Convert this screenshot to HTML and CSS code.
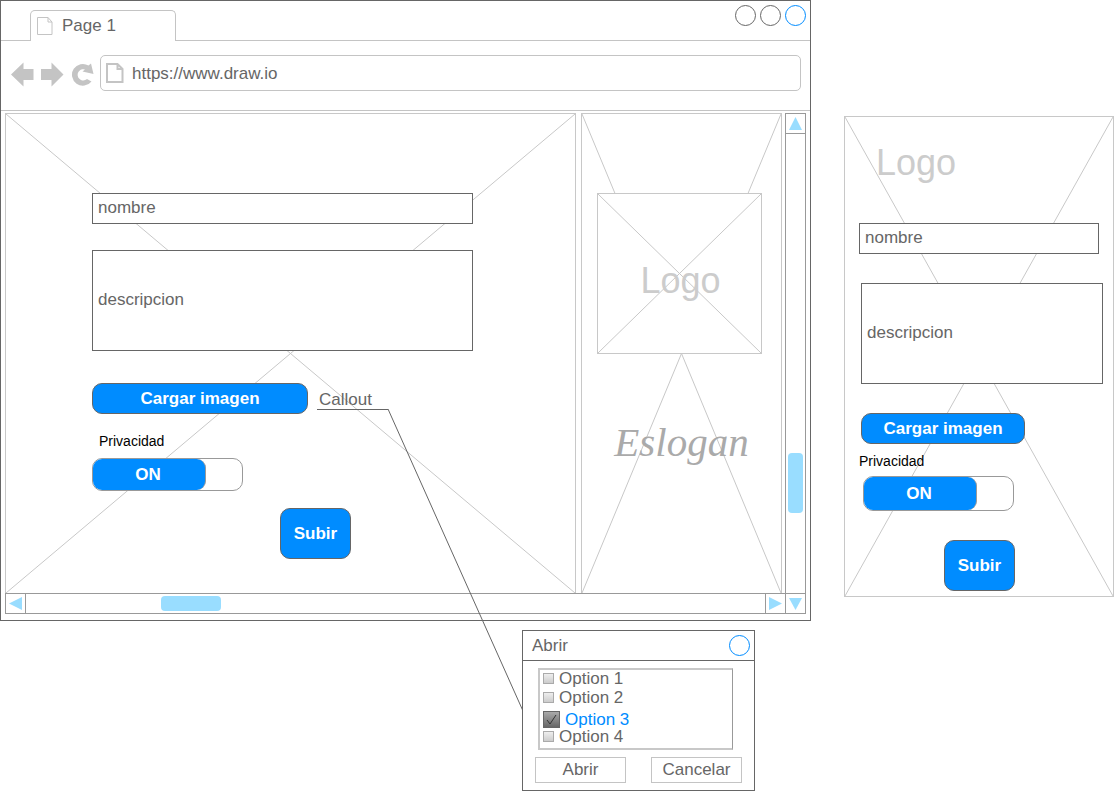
FILE: index.html
```html
<!DOCTYPE html>
<html lang="es">
<head>
<meta charset="utf-8">
<title>Page 1</title>
<link rel="stylesheet" href="styles.css">
</head>
<body>
<div class="board">
  <section class="browser">
    <header class="tabbar">
      <div class="tab">
        <svg class="tab-icon" viewBox="0 0 18 20"><path d="M1.500 1.500h10.500l4 4.500v12.500h-14.500zM12 1.500v4.500h4"/></svg>
        <span>Page 1</span>
      </div>
      <div class="window-buttons">
        <button class="circle" aria-label="Minimizar"></button>
        <button class="circle" aria-label="Maximizar"></button>
        <button class="circle circle-blue" aria-label="Cerrar"></button>
      </div>
    </header>
    <div class="toolbar">
      <button class="nav" aria-label="Atrás"><svg viewBox="0 0 24 26"><path d="M0 12.500L12.500 0.500v6.500H22.500v11H12.500V24.500z"/></svg></button>
      <button class="nav" aria-label="Adelante"><svg viewBox="0 0 24 26"><path d="M22.500 12.500L10.500 0.500v6.500H0v11h10.500V24.500z"/></svg></button>
      <button class="nav" aria-label="Recargar"><svg viewBox="0 0 24 26"><path d="M17.500 3.500L20 1.500L22.500 12L11.500 9.500L14 7.500A5.600 5.600 0 1 0 16 17L20.500 19.500A10.900 10.900 0 1 1 17.500 3.500z"/></svg></button>
      <div class="address">
        <svg class="address-icon" viewBox="0 0 20 22"><path d="M2 2h10.500l5 5v13h-15.500zM12.500 2v5h5"/></svg>
        <input class="url" type="text" aria-label="Dirección" value="https://www.draw.io">
      </div>
    </div>
    <div class="viewport">
      <div class="panes">
        <main class="wire pane-main">
          <svg class="cross" viewBox="0 0 100 100" preserveAspectRatio="none"><path d="M0 0L100 100M100 0L0 100"/></svg>
          <form class="form">
            <input class="field" type="text" aria-label="nombre" value="nombre">
            <textarea class="field area" aria-label="descripcion">descripcion</textarea>
            <div class="upload-row">
              <button type="button" class="primary upload">Cargar imagen</button>
              <div class="callout">Callout
                <svg class="leader" viewBox="0 0 135 302"><path d="M0 0L135 302"/></svg>
              </div>
            </div>
            <span class="caption" id="privacy-main">Privacidad</span>
            <button type="button" class="switch" role="switch" aria-checked="true" aria-labelledby="privacy-main"><span class="knob">ON</span></button>
            <button type="button" class="primary submit">Subir</button>
          </form>
        </main>
        <aside class="wire pane-side">
          <svg class="cross" viewBox="0 0 100 100" preserveAspectRatio="none"><path d="M0 0L100 100M100 0L0 100"/></svg>
          <div class="wire logo-box">
            <svg class="cross" viewBox="0 0 100 100" preserveAspectRatio="none"><path d="M0 0L100 100M100 0L0 100"/></svg>
            <span class="logo">Logo</span>
          </div>
          <p class="slogan">Eslogan</p>
        </aside>
      </div>
      <div class="vscroll">
        <svg class="arrow" viewBox="0 0 19 19"><path d="M9.500 3L16 16H3z"/></svg>
        <div class="vtrack"><div class="vthumb"></div></div>
        <svg class="arrow" viewBox="0 0 19 19"><path d="M9.500 16L16 4H3z"/></svg>
      </div>
      <div class="hscroll">
        <svg class="arrow" viewBox="0 0 19 19"><path d="M3 9.500L16 3v13z"/></svg>
        <div class="htrack"><div class="hthumb"></div></div>
        <svg class="arrow" viewBox="0 0 19 19"><path d="M16 9.500L3 3v13z"/></svg>
      </div>
    </div>
  </section>

  <section class="wire phone">
    <svg class="cross" viewBox="0 0 100 100" preserveAspectRatio="none"><path d="M0 0L100 100M100 0L0 100"/></svg>
    <form class="phone-form">
      <span class="logo phone-logo">Logo</span>
      <input class="field phone-name" type="text" aria-label="nombre" value="nombre">
      <textarea class="field area phone-area" aria-label="descripcion">descripcion</textarea>
      <button type="button" class="primary phone-upload">Cargar imagen</button>
      <span class="caption phone-caption" id="privacy-phone">Privacidad</span>
      <button type="button" class="switch phone-switch" role="switch" aria-checked="true" aria-labelledby="privacy-phone"><span class="knob">ON</span></button>
      <button type="button" class="primary submit phone-submit">Subir</button>
    </form>
  </section>

  <section class="dialog" role="dialog" aria-labelledby="dialog-title">
    <header class="dialog-head">
      <span id="dialog-title">Abrir</span>
      <button class="circle circle-blue" aria-label="Cerrar"></button>
    </header>
    <div class="options">
      <label class="option"><input type="checkbox">Option 1</label>
      <label class="option option-second"><input type="checkbox">Option 2</label>
      <label class="option option-on"><span class="tick"><input type="checkbox" checked><svg viewBox="0 0 17 17"><path d="M4 9l3 4L13 4"/></svg></span>Option 3</label>
      <label class="option"><input type="checkbox">Option 4</label>
    </div>
    <div class="actions">
      <button class="plain">Abrir</button>
      <button class="plain">Cancelar</button>
    </div>
  </section>
</div>
</body>
</html>
```

FILE: styles.css
```css
* { box-sizing: border-box; }

body {
  margin: 0;
  background: #fff;
  color: #666;
  font: 17px/20px "Liberation Sans", Arial, sans-serif;
}

button, input, textarea {
  margin: 0;
  padding: 0;
  border: 0;
  background: none;
  color: inherit;
  font: inherit;
}

svg { display: block; fill: none; }

.board {
  display: grid;
  grid-template-columns: minmax(0, 811fr) minmax(0, 270fr);
  column-gap: 33px;
  row-gap: 9px;
  align-items: start;
}

/* Placeholder boxes with crossed diagonals */
.wire { position: relative; border: 1px solid #c8c8c8; background: #fff; }
.cross { position: absolute; inset: 0; width: 100%; height: 100%; }
.cross path { stroke: #c8c8c8; stroke-width: 1; vector-effect: non-scaling-stroke; }

/* Browser window */
.browser { border: 1px solid #666; }

.tabbar {
  display: flex;
  justify-content: space-between;
  height: 40px;
  padding-left: 29px;
  border-bottom: 1px solid #c4c4c4;
}

.tab {
  display: flex;
  align-items: center;
  gap: 8px;
  width: 146px;
  height: 31px;
  margin-top: 9px;
  padding-left: 5px;
  border: 1px solid #c4c4c4;
  border-bottom: 0;
  border-radius: 5px 5px 0 0;
  background: #fff;
}

.tab-icon { width: 18px; height: 20px; stroke: #c4c4c4; }

.window-buttons { display: flex; gap: 4px; padding: 4px 4px 0 0; }
.circle { width: 21px; height: 21px; border: 1px solid #666; border-radius: 50%; }
.circle-blue { border-color: #008cff; }

.toolbar {
  display: flex;
  align-items: center;
  gap: 6px;
  padding: 14px 9px 19px 10px;
  border-bottom: 1px solid #c4c4c4;
}

.nav { width: 24px; height: 26px; margin-top: 4px; }
.nav svg { width: 24px; height: 26px; fill: #c4c4c4; }

.address {
  display: flex;
  flex: 1;
  align-items: center;
  gap: 7px;
  height: 36px;
  margin-left: -1px;
  padding-left: 4px;
  border: 1px solid #c4c4c4;
  border-radius: 5px;
}

.address-icon { width: 20px; height: 22px; stroke: #c4c4c4; stroke-width: 2; }
.url { flex: 1; min-width: 0; height: 22px; padding-top: 2px; }

.viewport {
  display: grid;
  grid-template-columns: minmax(0, 1fr) 21px;
  grid-template-rows: auto 21px;
  padding: 2px 4px 6px;
}

.panes {
  display: grid;
  grid-template-columns: minmax(0, 571fr) minmax(0, 201fr);
  gap: 5px;
  min-height: 480px;
  padding-right: 3px;
}

.pane-main, .pane-side { border-bottom: 0; }
.pane-main { padding: 79px 102px 34px 86px; z-index: 1; }
.pane-side { padding: 79px 19px 0 15px; }

/* Form controls */
.form, .phone-form { position: relative; display: flex; flex-direction: column; align-items: flex-start; }

.field {
  display: block;
  width: 100%;
  height: 31px;
  padding: 0 5px 2px;
  border: 1px solid #666;
  background: #fff;
}

.area { height: 101px; margin-top: 26px; padding-top: 39px; resize: none; overflow: hidden; }

.primary {
  border: 1px solid #666;
  border-radius: 10px;
  background: #008cff;
  color: #fff;
  font-weight: bold;
}

.upload-row { display: flex; gap: 9px; margin-top: 32px; }
.upload { width: 216px; height: 31px; }

.callout {
  position: relative;
  width: 71px;
  height: 27px;
  padding: 7px 2px 0;
  border-bottom: 1px solid #666;
  line-height: 19px;
}

.leader { position: absolute; left: 100%; top: 100%; width: 135px; height: 302px; overflow: visible; }
.leader path { stroke: #666; }

.caption { margin: 17px 0 7px 7px; color: #000; font-size: 14px; line-height: 20px; }

.switch {
  display: flex;
  width: 151px;
  height: 33px;
  border: 1px solid #999;
  border-radius: 10px;
  background: #fff;
}

.knob {
  display: flex;
  align-items: center;
  justify-content: center;
  width: 113px;
  height: 100%;
  padding-right: 2px;
  border-right: 1px solid #999;
  border-radius: 9px;
  background: #008cff;
  color: #fff;
  font-weight: bold;
}

.submit { width: 71px; height: 51px; margin: 17px 0 0 188px; }

/* Side pane */
.logo-box { display: flex; justify-content: center; height: 161px; padding: 67px 0 0 2px; }
.logo { position: relative; color: #ccc; font-size: 36px; line-height: 40px; }

.slogan {
  position: relative;
  margin: 64px 0 0;
  padding-left: 4px;
  color: #aaa;
  font: italic 41px/48px "Liberation Serif", "Times New Roman", serif;
  text-align: center;
}

/* Scroll bars */
.vscroll {
  display: flex;
  flex-direction: column;
  grid-column: 2;
  grid-row: 1 / 3;
  border: 1px solid #999;
}

.hscroll {
  display: flex;
  grid-column: 1;
  grid-row: 2;
  border: 1px solid #999;
  border-right: 0;
}

.arrow { flex: none; width: 19px; height: 19px; fill: #9df; }
.vtrack { flex: 1; padding: 319px 2px 0; border: solid #999; border-width: 1px 0; }
.htrack { flex: 1; padding: 2px 0 2px 135px; border: solid #999; border-width: 0 1px; }
.vthumb { height: 60px; border-radius: 4px; background: #9df; }
.hthumb { width: 60px; height: 15px; border-radius: 4px; background: #9df; }

/* Phone layout */
.phone { grid-column: 2; grid-row: 1; min-height: 481px; margin-top: 116px; padding: 26px 10px 5px 14px; }
.phone-logo { margin-left: 17px; }
.phone-name { width: auto; align-self: stretch; margin: 40px 4px 0 0; }
.phone-area { width: auto; align-self: stretch; margin: 29px 0 0 2px; }
.phone-upload { width: 164px; height: 31px; margin: 29px 0 0 2px; }
.phone-caption { margin: 7px 0 5px; }
.phone-switch { height: 35px; margin-left: 4px; }
.phone-submit { margin: 29px 0 0 85px; }

/* Dialog */
.dialog {
  grid-column: 1;
  grid-row: 2;
  position: relative;
  z-index: 2;
  width: 233px;
  margin-left: 522px;
  border: 1px solid #666;
  background: #fff;
}

.dialog-head {
  display: flex;
  align-items: center;
  justify-content: space-between;
  height: 30px;
  padding: 0 4px 0 9px;
  border-bottom: 1px solid #666;
}

.options {
  margin: 7px 21px 0 15px;
  padding: 0 0 3px 3px;
  border: 2px solid #c8c8c8;
  border-right: 1px solid #999;
}

.option { display: flex; align-items: center; gap: 5px; height: 17px; }
.option-second { margin-top: 2px; }
.option-on { margin-top: 5px; color: #008cff; }

.option input {
  appearance: none;
  width: 11px;
  height: 11px;
  border: 1px solid #aaa;
  background: linear-gradient(#eee, #ccc);
}

.tick { position: relative; }
.tick input { display: block; width: 17px; height: 17px; border-color: #666; background: linear-gradient(#aaa, #666); }
.tick svg { position: absolute; inset: 0; width: 17px; height: 17px; stroke: #333; }

.actions { display: flex; justify-content: space-between; padding: 7px 12px; }
.plain { width: 91px; height: 26px; border: 1px solid #c4c4c4; }
```
